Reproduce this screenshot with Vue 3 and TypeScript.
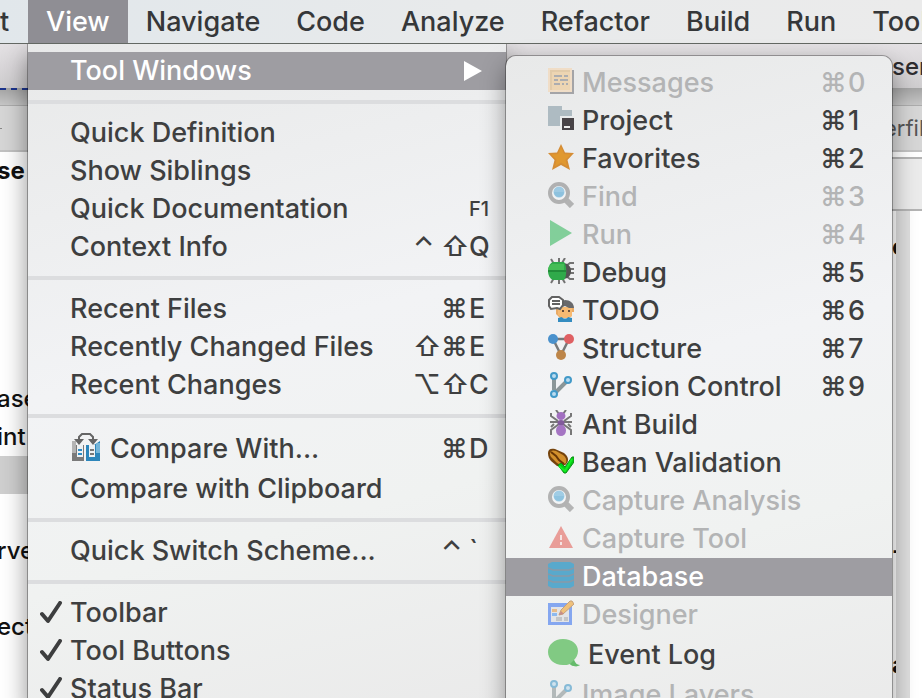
<script setup lang="ts">
interface MenuItem {
  label: string
  keys?: string[]
  icon?: string
  disabled?: boolean
  active?: boolean
  checked?: boolean
  submenu?: boolean
  large?: boolean
  small?: boolean
}

interface CodeLine {
  left?: string
  right?: string
  bold?: boolean
  current?: boolean
}

const menuBar = ['t', 'View', 'Navigate', 'Code', 'Analyze', 'Refactor', 'Build', 'Run', 'Tools']

const viewMenu: MenuItem[][] = [
  [{ label: 'Tool Windows', active: true, submenu: true }],
  [
    { label: 'Quick Definition' },
    { label: 'Show Siblings' },
    { label: 'Quick Documentation', keys: ['F1'], small: true },
    { label: 'Context Info', keys: ['⌃', '⇧', 'Q'] },
  ],
  [
    { label: 'Recent Files', keys: ['⌘', 'E'] },
    { label: 'Recently Changed Files', keys: ['⇧', '⌘', 'E'] },
    { label: 'Recent Changes', keys: ['⌥', '⇧', 'C'] },
  ],
  [
    { label: 'Compare With...', icon: 'compare', keys: ['⌘', 'D'], large: true },
    { label: 'Compare with Clipboard' },
  ],
  [{ label: 'Quick Switch Scheme...', keys: ['⌃', '`'] }],
  [
    { label: 'Toolbar', checked: true },
    { label: 'Tool Buttons', checked: true },
    { label: 'Status Bar', checked: true },
  ],
]

const toolWindows: MenuItem[] = [
  { label: 'Messages', icon: 'messages', keys: ['⌘', '0'], disabled: true },
  { label: 'Project', icon: 'project', keys: ['⌘', '1'] },
  { label: 'Favorites', icon: 'star', keys: ['⌘', '2'] },
  { label: 'Find', icon: 'find', keys: ['⌘', '3'], disabled: true },
  { label: 'Run', icon: 'run', keys: ['⌘', '4'], disabled: true },
  { label: 'Debug', icon: 'bug', keys: ['⌘', '5'] },
  { label: 'TODO', icon: 'todo', keys: ['⌘', '6'] },
  { label: 'Structure', icon: 'structure', keys: ['⌘', '7'] },
  { label: 'Version Control', icon: 'vcs', keys: ['⌘', '9'] },
  { label: 'Ant Build', icon: 'ant' },
  { label: 'Bean Validation', icon: 'bean' },
  { label: 'Capture Analysis', icon: 'find', disabled: true },
  { label: 'Capture Tool', icon: 'warning', disabled: true },
  { label: 'Database', icon: 'database', active: true },
  { label: 'Designer', icon: 'designer', disabled: true },
  { label: 'Event Log', icon: 'balloon', large: true },
  { label: 'Image Layers', icon: 'vcs', disabled: true },
]

const codeLines: CodeLine[] = [
  { left: 'se', bold: true },
  {},
  { right: 'o' },
  {},
  {},
  {},
  { left: 'ase' },
  { left: 'int' },
  { current: true },
  {},
  { left: 'rve', right: '-' },
  {},
  { left: 'ect' },
  { right: 'a' },
  {},
]

const icons: Record<string, string> = {
  messages: `<path d="M2 26h24V2h-2v22H2z" fill="#77777c"/><path d="M0 0h24v24H0z" fill="#f5d6b0"/><path d="M2 2h20v20H2z" fill="#dfb77e"/><path d="M4 4h18v18H4z" fill="#f0c88e"/><path d="M6 8h8M16 8h4M6 12h4M12 12h8M6 16h6M14 16h2M18 16h2" stroke="#85858a" stroke-width="2"/>`,
  project: `<path d="M0 0h14v4h10v16H0z" fill="#aebbc2"/><path d="M12 10h14v14H12z" fill="#e9ebec"/><path d="M14 12h12v12H14z" fill="#484347"/><path d="M16 20h6v2h-6z" fill="#eeeeee"/>`,
  star: `<path d="M13 0l4 8.500 9 .5-6.500 7 2.500 10-9-5-9 5 2.500-10L0 9l9-.5z" fill="#d58d35"/><path d="M13 3l3 7 7 .5-5.500 5 1.500 7-6-4-6 4 1.500-7L3 10.500l7-.5z" fill="#e0982f"/>`,
  find: `<path d="M17 17l7 7" stroke="#8c8c8c" stroke-width="6"/><circle cx="11" cy="11" r="9" fill="#f4f6f8" stroke="#898989" stroke-width="4"/><circle cx="11" cy="10" r="5.500" fill="#6bb4dd"/><path d="M6 10h10a5 5 0 0 1-10 0" fill="#4fa5d4"/>`,
  run: `<path d="M2 0l22 13L2 26z" fill="#3cba62"/>`,
  bug: `<path d="M3 1l3 5M11 0v5M17 0l-3 5M3 25l3-5M11 26v-5M17 25l-3-5M18 8l4-3h4M18 18l4 3h4M20 11h6M20 15h6" fill="none" stroke="#737373" stroke-width="2"/><path d="M16 5c5 1 7 4 7 8s-2 7-7 8z" fill="#535353"/><path d="M5 4h11c3 3 3 15 0 18H5c-3-1-5-5-5-9s2-8 5-9z" fill="#2faa4a"/><path d="M4 6h12v6H0c0-3 2-5 4-6z" fill="#45bd56"/><path d="M0 13h18" stroke="#218c39" stroke-width="2"/>`,
  todo: `<path d="M8 12h18v4h-2v4l-4 2h-8l-4-4z" fill="#e9aa65"/><path d="M10 11h14v9l-4 2h-6l-4-3z" fill="#f7ba72"/><path d="M10 12l2-6 5-2c5 0 9 3 9 8h-5l-4-2-5 2z" fill="#69696b"/><path d="M14 14h2v2h-2zM20 14h2v2h-2z" fill="#674c39"/><path d="M10 26v-4l4-1c1 2 5 2 6 0l4 1v4z" fill="#348cc0"/><path d="M4 1h7l4 3v5l-3 4-3-1-6 1-2-3V4z" fill="#fff" stroke="#626262" stroke-width="2"/><path d="M4 5h8M4 8h8" stroke="#626262" stroke-width="2"/>`,
  structure: `<path d="M5 5h16L13 21z" fill="none" stroke="#77797a" stroke-width="2.500"/><circle cx="5" cy="5" r="5" fill="#4a91cc"/><circle cx="21" cy="5" r="5" fill="#df6063"/><circle cx="13" cy="21" r="5" fill="#bd8549"/>`,
  vcs: `<path d="M6 7v11M8 20L18 10" fill="none" stroke="#8b9698" stroke-width="4"/><circle cx="6" cy="4" r="3" fill="#bcdcf0" stroke="#4299c8" stroke-width="2"/><circle cx="20" cy="8" r="3" fill="#bcdcf0" stroke="#4299c8" stroke-width="2"/><circle cx="6" cy="22" r="3" fill="#bcdcf0" stroke="#4299c8" stroke-width="2"/>`,
  ant: `<path d="M8 0l3 4M18 0l-3 4M3 3v3l7 5M23 3v3l-7 5M2 12h22M3 25v-5l8-6M23 25v-5l-8-6M6 14l-3 3M20 14l3 3" fill="none" stroke="#777" stroke-width="2"/><ellipse cx="13" cy="6" rx="4.500" ry="4" fill="#a16fc0"/><ellipse cx="13" cy="13" rx="3.500" ry="3" fill="#825b9b"/><ellipse cx="13" cy="20.500" rx="5" ry="5.500" fill="#a575c3"/>`,
  bean: `<path d="M0 5c0-4 3-5 7-4l9 4c4 3 5 7 3 10s-6 4-10 3L3 13C1 11 0 8 0 5z" fill="#75430c"/><path d="M2 5c1-3 3-3 6-2l7 4c3 2 4 5 3 8-3 2-6 2-9 0l-5-5C2 8 2 7 2 5z" fill="#d3902c"/><path d="M3 4l5 4 3 4 5 4" stroke="#683606" stroke-width="2" fill="none"/><path d="M10 17l3-2 4 4 7-10h2v5l-8 11h-2z" fill="#08c916" stroke="#0b8d16" stroke-width="1"/><path d="M11 18l6 5 7-12" fill="none" stroke="#12ef22" stroke-width="2"/>`,
  warning: `<path d="M13 2l12 22H1z" fill="#e5665e"/><path d="M13 11v5M13 18v3" stroke="#f9dcda" stroke-width="2"/>`,
  database: `<path d="M0 2l4-2h18l4 2v22l-4 2H4l-4-2z" fill="#59a9cc"/><path d="M0 6l5 2h16l5-2M0 12l5 2h16l5-2M0 18l5 2h16l5-2" fill="none" stroke="#8999a7" stroke-width="1.500"/>`,
  designer: `<path d="M0 3h24v22H0z" fill="#3f76f0"/><path d="M3 7h18v15H3z" fill="#dcdde2"/><path d="M4 9h5v3H4z" fill="#e19845"/><path d="M4 13h5v3H4z" fill="#4c95ef"/><path d="M8 17h6v4H8zM16 17h4v4h-4z" fill="#a6a8ad"/><path d="M11 15l2-5 9-9h2l2 3-11 10z" fill="#efa22f" stroke="#a96b2e" stroke-width="1"/><path d="M11 15l2-4 3 3z" fill="#ac4c46"/>`,
  balloon: `<path d="M15 1c9 0 15 5 15 12 0 4-2 7-4 9 1 3 3 5 6 5-5 3-9 0-10-1-2 1-4 1-7 1C6 27 0 21 0 14S6 1 15 1z" fill="#81ca83"/><path d="M26 22c1 3 3 5 6 5-5 3-9 0-10-1z" fill="#65bb6b"/>`,
  compare: `<path d="M0 8l4 4h8v16H0z" fill="#7a7a7a"/><path d="M14 12h8l6-4v20H14z" fill="#2d86bb"/><path d="M0 8h4v12H0z" fill="#b4b4b4"/><path d="M24 10h4v10h-4z" fill="#76b5d8"/><path d="M5 12h6v12H5zM17 12h6v12h-6z" fill="#eef1f3"/><path d="M6 17h4M6 21h4" stroke="#2f8cc4" stroke-width="2"/><path d="M18 17h4M18 21h4" stroke="#777" stroke-width="2"/><path d="M7 8V4l3-3h8l3 3v4" fill="none" stroke="#656565" stroke-width="2"/><path d="M2 6h10l-5 6zM16 6h10l-5 6z" fill="#656565"/>`,
}

function iconSize(item: MenuItem): { width: number; height: number } {
  if (item.icon === 'balloon') return { width: 32, height: 30 }
  if (item.icon === 'compare') return { width: 28, height: 28 }
  return { width: 26, height: 26 }
}
</script>

<template>
  <div class="screen">
    <nav class="menubar">
      <button
        v-for="name in menuBar"
        :key="name"
        type="button"
        class="menubar-item"
        :class="{ open: name === 'View', cut: name === 't' }"
      >{{ name }}</button>
    </nav>

    <main class="window">
      <header class="titlebar">
        <svg class="doc" width="20" height="26" viewBox="0 0 20 26" aria-hidden="true">
          <path d="M1 1h12l6 6v18H1z" fill="#f4f4f4" stroke="#b5b3b5" stroke-width="1" />
          <path d="M13 1v6h6" fill="none" stroke="#b5b3b5" stroke-width="1" />
        </svg>
        <span class="title">ser</span>
      </header>
      <div class="toolbar"><span class="wave"></span></div>
      <div class="tabs"><span class="tick"></span><span class="tab">erfil</span></div>
      <div class="editor">
        <div class="code">
          <div
            v-for="(line, i) in codeLines"
            :key="i"
            class="line"
            :class="{ bold: line.bold, current: line.current }"
          >
            <span>{{ line.left }}</span>
            <span class="sliver">{{ line.right }}</span>
          </div>
        </div>
        <div class="scroll"></div>
        <div class="edge"></div>
        <div class="crumb"></div>
      </div>
    </main>

    <div class="menu view-menu" role="menu">
      <div v-for="(group, g) in viewMenu" :key="g" class="group">
        <button
          v-for="item in group"
          :key="item.label"
          type="button"
          role="menuitem"
          class="item"
          :class="{ active: item.active, large: item.large }"
        >
          <span class="check">
            <svg v-if="item.checked" width="24" height="24" viewBox="0 0 24 24" aria-hidden="true">
              <path d="M2 13l6 7L20 2" fill="none" stroke="#3d3e3f" stroke-width="4" stroke-linejoin="round" stroke-linecap="round" />
            </svg>
          </span>
          <svg
            v-if="item.icon"
            class="icon"
            v-bind="iconSize(item)"
            aria-hidden="true"
            v-html="icons[item.icon]"
          ></svg>
          <span class="label">{{ item.label }}</span>
          <svg v-if="item.submenu" class="arrow" width="18" height="20" viewBox="0 0 18 20" aria-hidden="true">
            <path d="M0 0l18 10L0 20z" fill="#fff" />
          </svg>
          <span v-if="item.keys" class="keys" :class="{ small: item.small }">
            <kbd v-for="(k, n) in item.keys" :key="n">{{ k }}</kbd>
          </span>
        </button>
      </div>
    </div>

    <div class="menu tool-menu" role="menu">
      <button
        v-for="item in toolWindows"
        :key="item.label"
        type="button"
        role="menuitem"
        class="item"
        :class="{ active: item.active, large: item.large }"
        :disabled="item.disabled"
      >
        <svg
          v-if="item.icon"
          class="icon"
          v-bind="iconSize(item)"
          aria-hidden="true"
          v-html="icons[item.icon]"
        ></svg>
        <span class="label">{{ item.label }}</span>
        <span v-if="item.keys" class="keys">
          <kbd v-for="(k, n) in item.keys" :key="n">{{ k }}</kbd>
        </span>
      </button>
    </div>
  </div>
</template>

<style>
body {
  margin: 0;
  background: #fff;
}
</style>

<style scoped>
.screen {
  position: relative;
  display: flex;
  flex-direction: column;
  height: 100vh;
  overflow: hidden;
  font-family: Inter, 'Liberation Sans', sans-serif;
  font-size: 27px;
  font-weight: 450;
  color: #3e3f40;
}

button {
  margin: 0;
  border: 0;
  background: none;
  font: inherit;
  color: inherit;
  text-align: left;
}

.menubar {
  display: flex;
  flex: none;
  height: 43px;
  overflow: hidden;
  border-bottom: 1px solid #636863;
  background: linear-gradient(90deg, #e1e7eb, #e8eaeb 50%, #ebebeb);
}

.menubar-item {
  flex: none;
  padding: 0 18px;
  line-height: 44px;
  color: #353739;
}

.menubar-item.cut {
  width: 28px;
  padding: 0;
}

.menubar-item.open {
  background: #8f8e94;
  color: #fff;
}

.window {
  display: flex;
  flex: 1;
  flex-direction: column;
  min-height: 0;
  color: #111;
}

.titlebar {
  display: flex;
  flex: none;
  align-items: center;
  justify-content: flex-end;
  gap: 214px;
  height: 44px;
  overflow: hidden;
  background: linear-gradient(#e4e1e4, #cfcdcf);
}

.doc {
  flex: none;
  margin-top: 14px;
}

.title {
  width: 30px;
  font-size: 24px;
  color: #2d2c30;
}

.toolbar {
  flex: none;
  height: 17px;
  border-bottom: 1px solid #acacac;
  background: linear-gradient(#a4a4a4, #c6c6c6);
}

.wave {
  display: block;
  width: 28px;
  border-top: 2px dashed #1c348c;
}

.tabs {
  display: flex;
  flex: none;
  align-items: center;
  justify-content: space-between;
  height: 44px;
  border-bottom: 2px solid #c2c2c2;
  background: #d6d6d6;
  font-size: 22px;
  font-weight: 400;
  color: #555;
}

.tick {
  width: 2px;
  height: 1px;
  background: #888;
}

.tab {
  width: 38px;
}

.editor {
  display: grid;
  flex: 1;
  grid-template-columns: 1fr 14px 12px;
  min-height: 0;
  overflow: hidden;
  background: #fff;
}

.code {
  grid-area: 1 / 1;
  overflow: hidden;
}

.line {
  display: flex;
  justify-content: space-between;
  height: 38px;
  line-height: 38px;
  font-size: 24px;
  text-indent: -3px;
  color: #111;
}

.line.bold {
  font-weight: 700;
}

.line.current {
  background: #cfcfcf;
}

.sliver {
  width: 4px;
  background: #fff;
  font-weight: 700;
  text-indent: 0;
}

.scroll {
  grid-area: 1 / 2;
  background: #dedede;
}

.edge {
  grid-area: 1 / 3;
}

.crumb {
  grid-area: 1 / 1 / 2 / 4;
  justify-self: end;
  width: 40px;
  height: 50px;
  margin-top: 5px;
  border-top: 2px solid #b4b4b4;
  border-bottom: 2px solid #b4b4b4;
  background: #ebebeb;
  box-shadow: 0 -5px 0 #fff;
}

.menu {
  position: absolute;
  background: linear-gradient(165deg, #e8e9e9, #f2f3f5 45%, #f0f2f1 70%, #eaeaea);
}

.view-menu {
  top: 44px;
  left: 28px;
  width: 478px;
  padding-top: 8px;
  box-shadow: 0 0 0 1px rgba(0, 0, 0, 0.3), 0 10px 24px rgba(0, 0, 0, 0.45);
  clip-path: inset(0 -40px -40px -40px);
}

.tool-menu {
  top: 56px;
  left: 506px;
  width: 386px;
  padding: 8px 0;
  border-radius: 10px 10px 0 0;
  box-shadow: 0 0 0 1px rgba(0, 0, 0, 0.3), 0 10px 24px rgba(0, 0, 0, 0.4);
}

.group + .group {
  margin-top: 10px;
  padding-top: 10px;
  border-top: 4px solid #dcdddf;
}

.item {
  display: flex;
  align-items: center;
  width: 100%;
  height: 38px;
  padding: 0 15px 0 12px;
  line-height: 38px;
  white-space: nowrap;
}

.item.large {
  height: 42px;
}

.tool-menu .item {
  padding: 0 22px 0 42px;
}

.item.active {
  background: #9e9da2;
  color: #fff;
}

.item:disabled {
  color: #b3b4b5;
}

.item:disabled .icon {
  opacity: 0.6;
}

.check {
  display: flex;
  flex: none;
  width: 30px;
}

.icon {
  flex: none;
  margin: 0 8px 4px 0;
}

.view-menu .icon {
  margin-left: 2px;
  margin-right: 10px;
}

.label {
  flex: 1;
}

.arrow {
  flex: none;
  margin-right: 9px;
}

.keys {
  display: flex;
}

.keys kbd {
  width: 28px;
  font: inherit;
}

.keys kbd:last-child {
  width: 22px;
}

.keys.small {
  font-size: 20px;
}
</style>
